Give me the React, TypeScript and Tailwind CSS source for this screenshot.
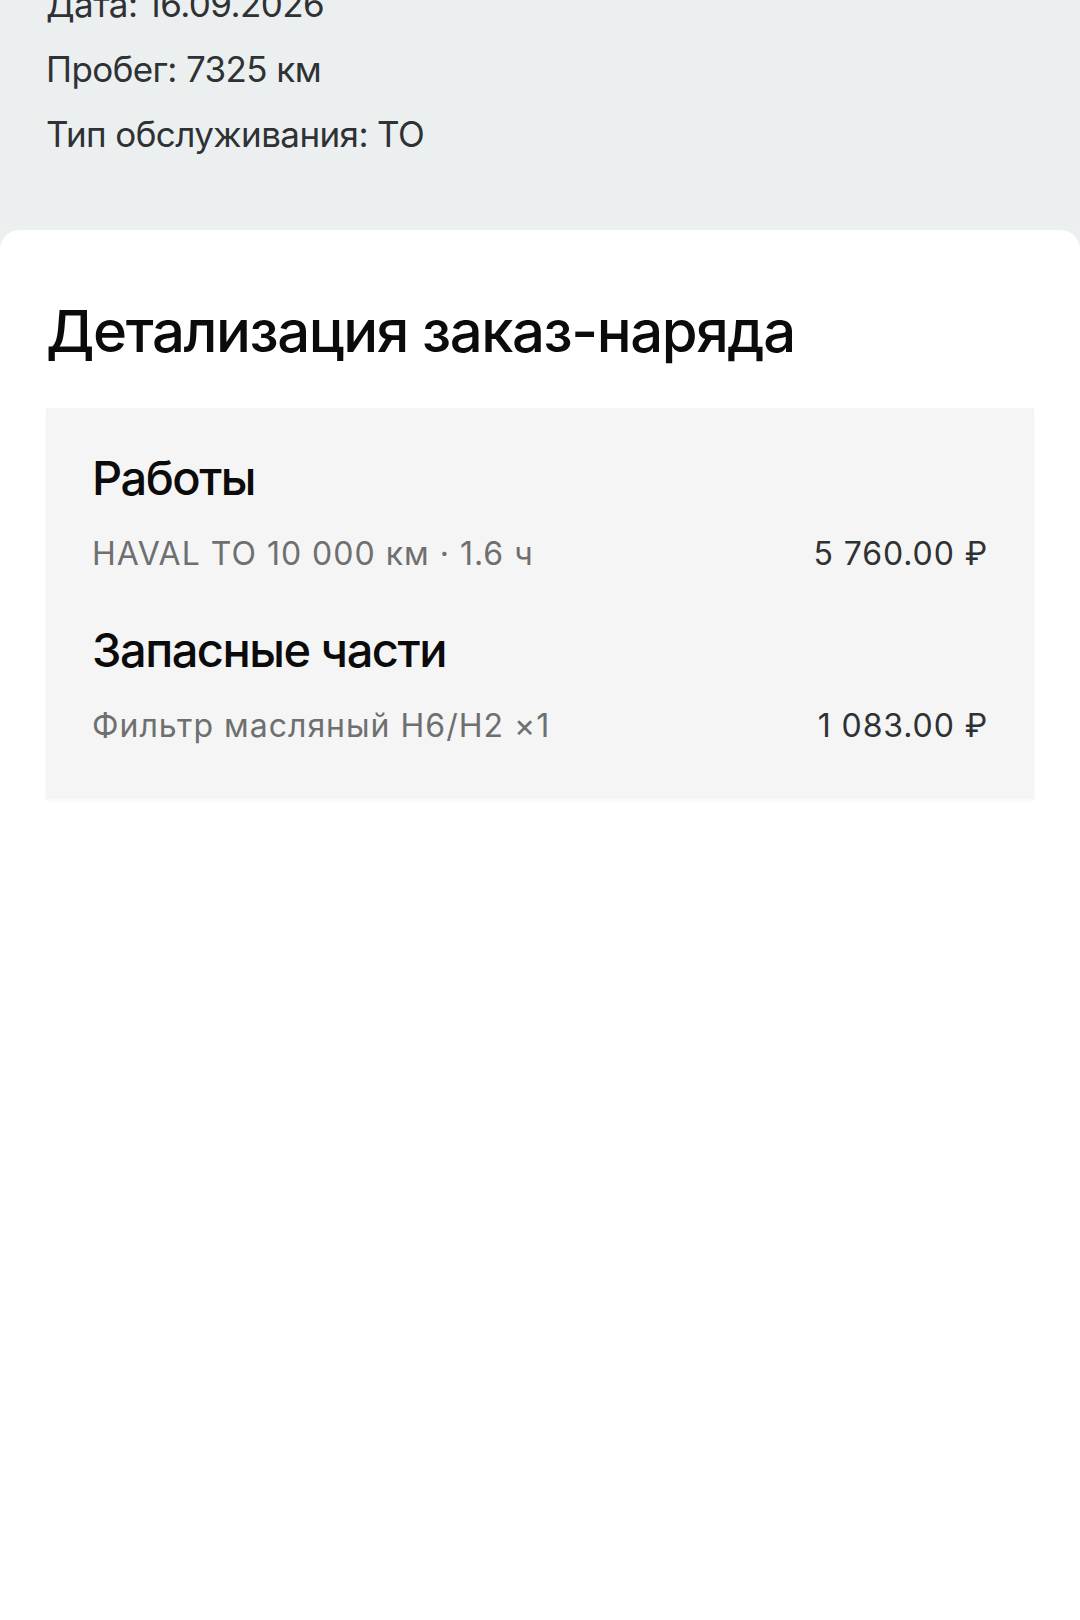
const works = [{ name: 'HAVAL ТО 10 000 км · 1.6 ч', price: '5 760.00 ₽' }];
const parts = [{ name: 'Фильтр масляный H6/H2 ×1', price: '1 083.00 ₽' }];

function Section({ title, items, className = '' }: { title: string; items: { name: string; price: string }[]; className?: string }) {
  return (
    <div className={className}>
      <h3 className="text-[47px] leading-[56px] font-medium tracking-[-1.5px] text-[#0b0b0b]">{title}</h3>
      {items.map((item) => (
        <div key={item.name} className="mt-[24px] flex items-center justify-between text-[32px] leading-[48px]">
          <span className="tracking-[1px] text-[#6e6f70]">{item.name}</span>
          <span className="tracking-[0.9px] text-[#2f3133]">{item.price}</span>
        </div>
      ))}
    </div>
  );
}

export default function App() {
  return (
    <div className="min-h-[1620px] overflow-hidden bg-gradient-to-b from-[#eceff0] to-[#f0f2f2] font-['Inter',sans-serif]">
      {/* Order info */}
      <div className="-mt-[28px] px-[46px] pb-[63px] text-[35px] leading-[65px] tracking-[-0.6px] text-[#2f3234]">
        <p>Дата: 16.09.2026</p>
        <p>Пробег: 7325 км</p>
        <p>Тип обслуживания: ТО</p>
      </div>

      {/* Details card */}
      <div className="min-h-[1400px] rounded-t-[20px] bg-white px-[46px] pt-[66px]">
        <h2 className="text-[58px] leading-[70px] font-medium tracking-[-1.4px] text-[#0b0b0b]">Детализация заказ-наряда</h2>
        <div className="mt-[42px] bg-[#f5f5f5] px-[46px] pt-[42px] pb-[49px] shadow-[0_2px_3px_rgba(0,0,0,0.03)]">
          <Section title="Работы" items={works} />
          <Section title="Запасные части" items={parts} className="mt-[44px]" />
        </div>
      </div>
    </div>
  );
}
